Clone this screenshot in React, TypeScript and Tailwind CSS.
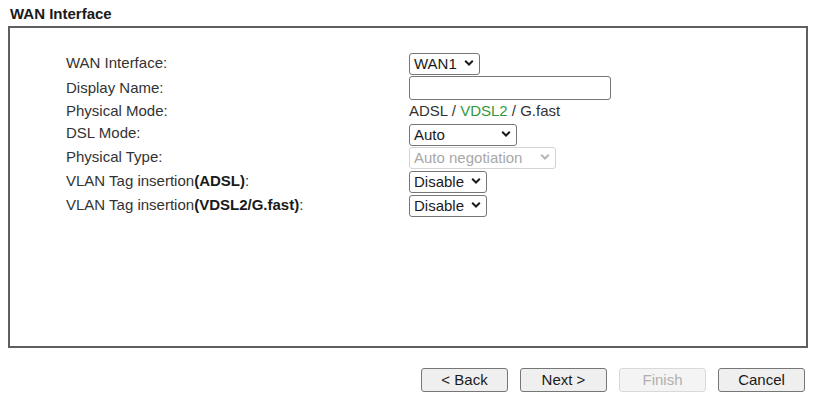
import type { ReactNode } from 'react';

const font = { fontFamily: '"Liberation Sans", Arial, sans-serif' };

function Chevron({ disabled }: { disabled?: boolean }) {
  return (
    <svg
      width="10"
      height="7"
      viewBox="0 0 10 7"
      className="pointer-events-none absolute right-[6px] top-1/2 -translate-y-1/2"
    >
      <path
        d="M1.2 1.3 L5 5 L8.8 1.3"
        fill="none"
        stroke={disabled ? '#b5b5b5' : '#1a1a1a'}
        strokeWidth="2"
      />
    </svg>
  );
}

function Select({
  value,
  width,
  disabled,
}: {
  value: string;
  width: string;
  disabled?: boolean;
}) {
  return (
    <div className={`relative ${width} h-[22px]`}>
      <select
        disabled={disabled}
        defaultValue={value}
        className={`h-full w-full appearance-none rounded-[3px] border bg-white pl-[4px] pr-[20px] text-[15px] leading-[20px] ${
          disabled ? 'border-[#d4d4d4] text-[#a8a8a8]' : 'border-[#767676] text-[#1a1a1a]'
        }`}
      >
        <option>{value}</option>
      </select>
      <Chevron disabled={disabled} />
    </div>
  );
}

function Row({ label, height, children }: { label: ReactNode; height: string; children: ReactNode }) {
  return (
    <div className={`flex items-center ${height}`}>
      <div className="w-[343px] shrink-0 text-[15px] text-[#333]">{label}</div>
      <div className="flex items-center">{children}</div>
    </div>
  );
}

function WizardButton({ label, disabled }: { label: string; disabled?: boolean }) {
  return (
    <button
      disabled={disabled}
      className={`h-[24px] w-[87px] rounded-[3px] border text-[15px] leading-[20px] ${
        disabled
          ? 'border-[#d9d9d9] bg-[#f4f4f4] text-[#b0b0b0]'
          : 'border-[#767676] bg-[#efefef] text-[#1a1a1a]'
      }`}
    >
      {label}
    </button>
  );
}

export default function App() {
  return (
    <div className="h-[401px] w-[815px] bg-white pt-[5px]" style={font}>
      {/* Title */}
      <div className="pl-[10px] text-[15px] font-bold leading-[17px] text-[#1a1a1a]">WAN Interface</div>

      {/* Settings box */}
      <div className="ml-[8px] mt-[4px] h-[322px] w-[800px] border-2 border-[#5f5f5f] pl-[56px] pt-[23px]">
        <Row label="WAN Interface:" height="h-[24px]">
          <Select value="WAN1" width="w-[71px]" />
        </Row>
        <Row label="Display Name:" height="h-[26px]">
          <input
            type="text"
            className="h-[24px] w-[202px] rounded-[3px] border border-[#767676] bg-white px-[4px] text-[15px]"
          />
        </Row>
        <Row label="Physical Mode:" height="h-[21px]">
          <span className="text-[15px] text-[#333]">
            ADSL / <span className="text-[#2f9a3c]">VDSL2</span> / G.fast
          </span>
        </Row>
        <Row label="DSL Mode:" height="h-[23px]">
          <Select value="Auto" width="w-[108px]" />
        </Row>
        <Row label="Physical Type:" height="h-[24px]">
          <Select value="Auto negotiation" width="w-[147px]" disabled />
        </Row>
        <Row
          label={
            <>
              VLAN Tag insertion<span className="font-bold text-[#1a1a1a]">(ADSL)</span>:
            </>
          }
          height="h-[24px]"
        >
          <Select value="Disable" width="w-[78px]" />
        </Row>
        <Row
          label={
            <>
              VLAN Tag insertion<span className="font-bold text-[#1a1a1a]">(VDSL2/G.fast)</span>:
            </>
          }
          height="h-[24px]"
        >
          <Select value="Disable" width="w-[78px]" />
        </Row>
      </div>

      {/* Wizard buttons */}
      <div className="mt-[20px] flex w-[805px] justify-end gap-[12px]">
        <WizardButton label="< Back" />
        <WizardButton label="Next >" />
        <WizardButton label="Finish" disabled />
        <WizardButton label="Cancel" />
      </div>
    </div>
  );
}
